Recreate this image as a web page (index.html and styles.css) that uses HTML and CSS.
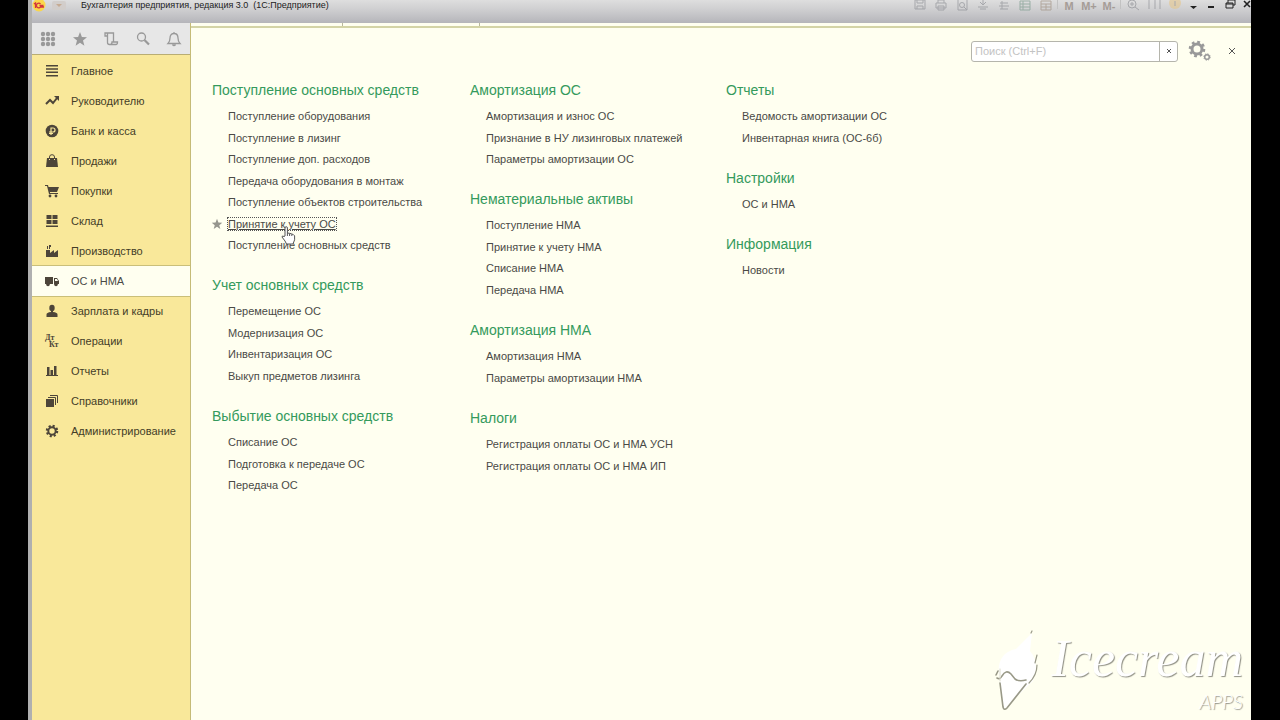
FILE: index.html
```html
<!DOCTYPE html>
<html lang="ru">
<head>
<meta charset="utf-8">
<title>Бухгалтерия предприятия</title>
<link rel="stylesheet" href="styles.css">
</head>
<body>
<div class="window">
  <header class="titlebar">
    <svg class="logo" viewBox="0 0 14 14"><circle cx="7" cy="5" r="6.500" fill="#ffd83c"/><path d="M2 4l1.500-1v5M8.500 4a2.300 2.300 0 1 0 0 3h3.500M7.500 5.500h4" fill="none" stroke="#d3262c" stroke-width="1.300"/></svg>
    <svg class="drop" viewBox="0 0 14 14"><rect width="14" height="9" y="1" rx="2" fill="#d2cdca"/><path d="M4 4h6l-3 3z" fill="#c4a78c"/></svg>
    <h1 class="title">Бухгалтерия предприятия, редакция 3.0&nbsp; (1С:Предприятие)</h1>
    <div class="tools">
      <button class="tool" aria-label="Сохранить"><svg viewBox="0 0 14 14"><path d="M2 0h10v9H2zM4 0v3h6V0M4 9V6h6v3"/></svg></button>
      <button class="tool" aria-label="Печать"><svg viewBox="0 0 14 14"><path d="M4 3V0h6v3M2 3h10v5H2zM4 6h6v4H4z"/></svg></button>
      <button class="tool" aria-label="Просмотр"><svg viewBox="0 0 14 14"><path d="M3 0v10h9V0"/><circle cx="7" cy="5" r="2.500"/><path d="M9 7l3 3"/></svg></button>
      <button class="tool" aria-label="Вырезать"><svg viewBox="0 0 14 14"><path d="M4 2l3 3 3-3M7 0v5M2 7h10M4 9h6"/></svg></button>
      <button class="tool" aria-label="Сравнить"><svg viewBox="0 0 14 14"><path d="M3 3h8M2 6h10M3 9h8M5 1v8"/></svg></button>
      <button class="tool green" aria-label="Таблица"><svg viewBox="0 0 14 14"><path d="M2 1h10v9H2zM2 4h10M5 1v9M2 7h10"/></svg></button>
      <button class="tool warm" aria-label="Календарь"><svg viewBox="0 0 14 14"><path d="M2 1h10v9H2zM2 4h10M7 4v6M2 7h10"/></svg></button>
      <span class="sep"></span>
      <button class="tool mem">M</button>
      <button class="tool mem">M+</button>
      <button class="tool mem">M-</button>
      <span class="sep"></span>
      <button class="tool" aria-label="Масштаб"><svg viewBox="0 0 14 14"><circle cx="6" cy="4" r="4"/><path d="M4 4h4M6 2v4M9 7l4 3"/></svg></button>
      <button class="tool" aria-label="Панели"><svg viewBox="0 0 14 14"><path d="M2 0v9M8 0v9M13 0v9"/></svg></button>
      <button class="tool" aria-label="Информация"><svg viewBox="0 0 14 14"><circle cx="7" cy="3" r="6" fill="#e5c78d" stroke="none"/><path d="M7 1v5"/></svg></button>
      <button class="tool dark" aria-label="Ещё"><svg viewBox="0 0 14 14"><path d="M3 6h7l-3.500 3z" fill="#222" stroke="none"/></svg></button>
      <button class="tool dark" aria-label="Свернуть"><svg viewBox="0 0 14 14"><path d="M3 7h6" stroke-width="2"/></svg></button>
      <button class="tool dark" aria-label="Восстановить"><svg viewBox="0 0 14 14"><path d="M3 3h7v5H3zM5 3V0h7v5h-2M3 4h7"/></svg></button>
      <button class="tool dark" aria-label="Закрыть окно"><svg viewBox="0 0 14 14"><path d="M3 1l6 6M9 1L3 7" stroke-width="1.600"/></svg></button>
    </div>
  </header>
  <div class="body">
    <aside class="side">
      <div class="quick">
        <button aria-label="Меню"><svg viewBox="0 0 16 16" fill="#999"><circle cx="3" cy="3" r="2.200"/><circle cx="8" cy="3" r="2.200"/><circle cx="13" cy="3" r="2.200"/><circle cx="3" cy="8" r="2.200"/><circle cx="8" cy="8" r="2.200"/><circle cx="13" cy="8" r="2.200"/><circle cx="3" cy="13" r="2.200"/><circle cx="8" cy="13" r="2.200"/><circle cx="13" cy="13" r="2.200"/></svg></button>
        <button aria-label="Избранное"><svg viewBox="0 0 16 16" fill="#999"><path d="M8 1l1.900 4.900 5.100.3-4 3.300 1.400 5.200L8 11.800l-4.400 2.900L5 9.500 1 6.200l5.100-.3z"/></svg></button>
        <button aria-label="История"><svg viewBox="0 0 16 16" fill="none" stroke="#999" stroke-width="1.300"><path d="M4.500 5H2V2h8.500v9M4.500 2v9.500q0 2 2 2H13q1.500 0 1.500-2.500H9q0 2.500-2 2.500"/></svg></button>
        <button aria-label="Поиск"><svg viewBox="0 0 16 16" fill="none" stroke="#999" stroke-width="1.300"><circle cx="6.500" cy="6" r="4"/><path d="M9.500 9l4.500 4.500" stroke-width="2.200"/></svg></button>
        <button aria-label="Оповещения"><svg viewBox="0 0 16 16" fill="none" stroke="#999" stroke-width="1.300"><path d="M2 12.500c2-2 2-3 2-5.500 0-3 1.500-4.500 4-4.500S12 4 12 7c0 2.500 0 3.500 2 5.500zM8 2.500V1M6.500 13.500q1.500 2 3 0"/></svg></button>
      </div>
      <nav class="menu">
        <a href="#"><svg viewBox="0 0 14 14"><path d="M1 1h12v1.500H1zM1 4.300h12v1.500H1zM1 7.600h12v1.500H1zM1 10.900h12v1.500H1z"/></svg>Главное</a>
        <a href="#"><svg viewBox="0 0 14 14"><path d="M1 10l4-4 3 3 4-5" fill="none" stroke="#4d4539" stroke-width="2"/><path d="M9 2h5v5z"/></svg>Руководителю</a>
        <a href="#"><svg viewBox="0 0 14 14"><circle cx="7" cy="7" r="6.300"/><path d="M6 11V4h2a2 2 0 0 1 0 4H4M4 9.500h4" fill="none" stroke="#f9e89a" stroke-width="1.200"/></svg>Банк и касса</a>
        <a href="#"><svg viewBox="0 0 14 14"><path d="M2 4h10l1 9H1z"/><path d="M4.500 6V3q0-2.300 2.500-2.300T9.500 3v3" fill="none" stroke="#4d4539"/><path d="M4.500 5v1M9.500 5v1" stroke="#f9e89a"/></svg>Продажи</a>
        <a href="#"><svg viewBox="0 0 14 14"><path d="M0 1h3l.5 2H14l-2 5H5v1h8v1H4L2 2H0z"/><circle cx="5" cy="12" r="1.400"/><circle cx="11" cy="12" r="1.400"/></svg>Покупки</a>
        <a href="#"><svg viewBox="0 0 14 14"><path d="M1.500 1h5v4h-5zM7.500 1h5v4h-5zM1.500 6h5v4h-5zM7.500 6h5v4h-5zM1 11.500h12V13H1z"/></svg>Склад</a>
        <a href="#"><svg viewBox="0 0 14 14"><path d="M1 13V6h4v3l4-3v3l4-3v7zM2 5V2h1v3zM4 5V1h2v2H5v2z"/></svg>Производство</a>
        <a href="#" class="current" aria-current="page"><svg viewBox="0 0 14 14"><path d="M0 3h8v7H0zM9 4h3l2 3v3H9z"/><circle cx="3" cy="10.500" r="1.800"/><circle cx="11" cy="10.500" r="1.800"/><path d="M10 5h2l1 2h-3z" fill="#fffff0"/></svg>ОС и НМА</a>
        <a href="#"><svg viewBox="0 0 14 14"><ellipse cx="7" cy="4" rx="2.700" ry="3.300"/><path d="M6 6h2v2q4.500 .5 4.500 2.500V13h-11v-2.500Q1.500 8.500 6 8z"/></svg>Зарплата и кадры</a>
        <a href="#"><svg viewBox="0 0 14 14" class="dtkt"><text x="0" y="6">Дт</text><text x="4" y="13">Кт</text></svg>Операции</a>
        <a href="#"><svg viewBox="0 0 14 14"><path d="M2 3h2.500v8H2zM5.500 6H8v5H5.500zM9 2h2.500v9H9zM1 11h12v1H1z"/></svg>Отчеты</a>
        <a href="#"><svg viewBox="0 0 14 14"><path d="M1 5h8v8H1z"/><path d="M3 3.500h7.500V11M5 1.500h7.500V9" fill="none" stroke="#4d4539"/></svg>Справочники</a>
        <a href="#"><svg viewBox="0 0 14 14"><circle cx="7" cy="7" r="5" fill="none" stroke="#4d4539" stroke-width="2.500" stroke-dasharray="2 1.927"/><circle cx="7" cy="7" r="3.700" fill="none" stroke="#4d4539" stroke-width="2"/></svg>Администрирование</a>
      </nav>
    </aside>
    <main class="panel">
      <div class="tabs"><span></span><span></span></div>
      <div class="searchbar">
        <form class="search">
          <input type="text" placeholder="Поиск (Ctrl+F)" aria-label="Поиск (Ctrl+F)">
          <button type="button" aria-label="Очистить"><svg viewBox="0 0 8 8"><path d="M2 2l4 4M6 2L2 6"/></svg></button>
        </form>
        <button class="gears" aria-label="Настройки"><svg viewBox="0 0 24 22" fill="none" stroke="#999"><circle cx="9" cy="9" r="7" stroke-width="2.600" stroke-dasharray="2.750 2.748"/><circle cx="9" cy="9" r="5" stroke-width="3"/><circle cx="19" cy="17" r="2.300" stroke-width="1.500"/><circle cx="19" cy="17" r="3.200" stroke-width="1" stroke-dasharray="1.300 1.213"/></svg></button>
        <button class="close" aria-label="Закрыть"><svg viewBox="0 0 8 8"><path d="M1 1l6 6M7 1L1 7"/></svg></button>
      </div>
      <div class="columns">
        <div class="column">
          <section><h2>Поступление основных средств</h2><ul>
            <li><a href="#">Поступление оборудования</a></li>
            <li><a href="#">Поступление в лизинг</a></li>
            <li><a href="#">Поступление доп. расходов</a></li>
            <li><a href="#">Передача оборудования в монтаж</a></li>
            <li><a href="#">Поступление объектов строительства</a></li>
            <li class="hovered"><svg class="star" viewBox="0 0 16 16"><path d="M8 1l1.900 4.900 5.100.3-4 3.300 1.400 5.200L8 11.800l-4.400 2.900L5 9.500 1 6.200l5.100-.3z"/></svg><a href="#">Принятие к учету ОС</a><svg class="pointer" viewBox="0 0 15 19"><path d="M4 10V2q0-1.300 1.200-1.300T6.400 2v5l2 .3 2 .5 2 .8 1.200 1.200v4L12 18H5.500L4 15l-3-4q0-1.800 2-.5zM6.400 7v3M8.600 7.500V10M10.800 8.200V10"/></svg></li>
            <li><a href="#">Поступление основных средств</a></li>
          </ul></section>
          <section><h2>Учет основных средств</h2><ul>
            <li><a href="#">Перемещение ОС</a></li>
            <li><a href="#">Модернизация ОС</a></li>
            <li><a href="#">Инвентаризация ОС</a></li>
            <li><a href="#">Выкуп предметов лизинга</a></li>
          </ul></section>
          <section><h2>Выбытие основных средств</h2><ul>
            <li><a href="#">Списание ОС</a></li>
            <li><a href="#">Подготовка к передаче ОС</a></li>
            <li><a href="#">Передача ОС</a></li>
          </ul></section>
        </div>
        <div class="column">
          <section><h2>Амортизация ОС</h2><ul>
            <li><a href="#">Амортизация и износ ОС</a></li>
            <li><a href="#">Признание в НУ лизинговых платежей</a></li>
            <li><a href="#">Параметры амортизации ОС</a></li>
          </ul></section>
          <section><h2>Нематериальные активы</h2><ul>
            <li><a href="#">Поступление НМА</a></li>
            <li><a href="#">Принятие к учету НМА</a></li>
            <li><a href="#">Списание НМА</a></li>
            <li><a href="#">Передача НМА</a></li>
          </ul></section>
          <section><h2>Амортизация НМА</h2><ul>
            <li><a href="#">Амортизация НМА</a></li>
            <li><a href="#">Параметры амортизации НМА</a></li>
          </ul></section>
          <section><h2>Налоги</h2><ul>
            <li><a href="#">Регистрация оплаты ОС и НМА УСН</a></li>
            <li><a href="#">Регистрация оплаты ОС и НМА ИП</a></li>
          </ul></section>
        </div>
        <div class="column">
          <section><h2>Отчеты</h2><ul>
            <li><a href="#">Ведомость амортизации ОС</a></li>
            <li><a href="#">Инвентарная книга (ОС-6б)</a></li>
          </ul></section>
          <section><h2>Настройки</h2><ul>
            <li><a href="#">ОС и НМА</a></li>
          </ul></section>
          <section><h2>Информация</h2><ul>
            <li><a href="#">Новости</a></li>
          </ul></section>
        </div>
      </div>
      <div class="watermark">
        <svg viewBox="0 0 50 86"><path d="M5 48Q2 24 22 20L38 4l-2 18q10 12 3 30L10 80z" fill="#fff"/><g fill="none" stroke="#999988" stroke-linecap="round"><path d="M2 46l2-4M3 49q3 2 5-2 4-7 9-2l4 5q4 3 11 1" stroke-width="1.600"/><path d="M6 54l3 24q1 4 4 1l19-24" stroke-width="1.600"/><path d="M35 54q8-8 8-18M38 2l-1 2M43 26l-2 8" stroke-width="1.200"/><path d="M6 52V40" stroke="#ddddcc"/></g></svg>
        <div class="brand"><span class="name">Icecream</span><span class="apps">APPS</span></div>
      </div>
    </main>
  </div>
</div>
</body>
</html>
```
FILE: styles.css
```css
* { box-sizing: border-box; }
body {
  margin: 0;
  background: #000;
  color: #4a4a46;
  font: 11px/20px "Liberation Sans", Arial, sans-serif;
}
button {
  display: flex;
  align-items: center;
  justify-content: center;
  padding: 0;
  border: 0;
  background: none;
  font: inherit;
}
a { color: inherit; text-decoration: none; }
svg { display: block; flex: none; }
.window {
  display: flex;
  flex-direction: column;
  min-height: 100vh;
  margin: 0 29px 0 28px;
  border-left: 4px solid #b0b0b0;
  background: #fffff0;
}
.titlebar {
  display: flex;
  align-items: flex-start;
  height: 23px;
  overflow: hidden;
  background: linear-gradient(#dedede, #cfcfd1 40%, #b5b5ba);
}
.logo, .drop { width: 14px; height: 14px; opacity: 0.9; }
.drop { margin: 0 15px 0 6px; }
.title {
  flex: 1;
  margin: 0;
  color: #222;
  font-size: 9px;
  line-height: 10px;
  font-weight: 400;
  white-space: nowrap;
}
.tools { display: flex; margin-right: -6px; }
.tool { width: 21px; height: 11px; opacity: 0.6; }
.tool svg { width: 14px; height: 14px; margin-top: 3px; fill: none; stroke: #87898f; }
.tool.green svg { stroke: #739585; }
.tool.warm svg { stroke: #9b8978; }
.tool.mem { width: 20px; color: #85776d; font-weight: 700; line-height: 10px; }
.tool.dark { width: 18px; opacity: 1; }
.tool.dark svg { stroke: #222; }
.sep { width: 1px; height: 9px; margin: 0 1px; background: #c2c2c2; }
.body { display: flex; flex: 1; }
.side {
  width: 159px;
  flex: none;
  border-right: 1px solid #c5bb77;
  background: #f9e89a;
}
.quick {
  display: flex;
  justify-content: space-between;
  height: 32px;
  padding: 0 8px;
  border-bottom: 1px solid #b9ad73;
  background: #e7e7e7;
}
.quick svg { width: 16px; height: 16px; }
.menu { display: flex; flex-direction: column; padding-top: 1px; color: #443d28; }
.menu a {
  display: flex;
  align-items: center;
  gap: 12px;
  height: 30px;
  padding-left: 13px;
  white-space: nowrap;
}
.menu svg { width: 14px; height: 14px; fill: #4d4539; }
.menu .current {
  background: #fffff0;
  box-shadow: 0 -1px #cabf79, 0 1px #cabf79;
  color: #4a4a46;
}
.dtkt { font: 700 8px "Liberation Serif", serif; overflow: visible; }
.panel { position: relative; flex: 1; min-width: 0; }
.tabs { display: flex; height: 5px; border-bottom: 2px solid #d4d4a6; }
.tabs span { width: 137px; border-right: 1px solid #b9b99d; }
.tabs span:first-child { width: 152px; }
.searchbar {
  display: flex;
  align-items: center;
  justify-content: flex-end;
  height: 46px;
  padding-right: 15px;
}
.search {
  display: flex;
  width: 207px;
  height: 21px;
  border: 1px solid #b5b5ac;
  border-radius: 3px;
  background: #fff;
}
.search input {
  flex: 1;
  min-width: 0;
  padding: 0 3px;
  border: 0;
  outline: 0;
  background: none;
  font: inherit;
}
.search input::placeholder { color: #c3c3c3; opacity: 1; }
.search button { width: 18px; border-left: 1px solid #b5b5ac; }
.search svg, .close svg { width: 8px; height: 8px; fill: none; stroke: #555; stroke-width: 1; }
.gears { margin-left: 10px; }
.gears svg { width: 24px; height: 22px; }
.close { margin-left: 16px; }
.columns { display: flex; padding: 5px 0 0 21px; }
.column { width: 258px; }
.column:nth-child(2) { width: 256px; }
section { margin-bottom: 18px; }
h2 {
  margin: 0;
  padding-bottom: 5px;
  color: #349a5c;
  font-size: 14px;
  line-height: 22px;
  font-weight: 400;
}
ul { margin: 0; padding: 0 0 0 16px; list-style: none; }
li { position: relative; line-height: 21px; white-space: nowrap; }
li:nth-child(even) { padding-top: 1px; }
.hovered a {
  outline: 1px dotted #555;
  text-decoration: underline;
}
.star { position: absolute; left: -17px; top: 5px; width: 12px; height: 12px; fill: #96968e; }
.pointer { position: absolute; left: 53px; top: 13px; z-index: 1; width: 15px; height: 19px; fill: #fff; stroke: #555; }
.watermark {
  position: absolute;
  right: 8px;
  bottom: 5px;
  display: flex;
  align-items: flex-start;
  gap: 8px;
}
.watermark > svg { width: 50px; height: 86px; }
.brand {
  display: flex;
  flex-direction: column;
  color: #fff;
  font-style: italic;
  text-shadow: 1px 1px 1px #909085;
}
.name { font-family: "Liberation Serif", serif; font-size: 52px; line-height: 60px; }
.apps { align-self: flex-end; font-family: Lato, sans-serif; font-size: 20px; font-weight: 300; line-height: 24px; }
```
